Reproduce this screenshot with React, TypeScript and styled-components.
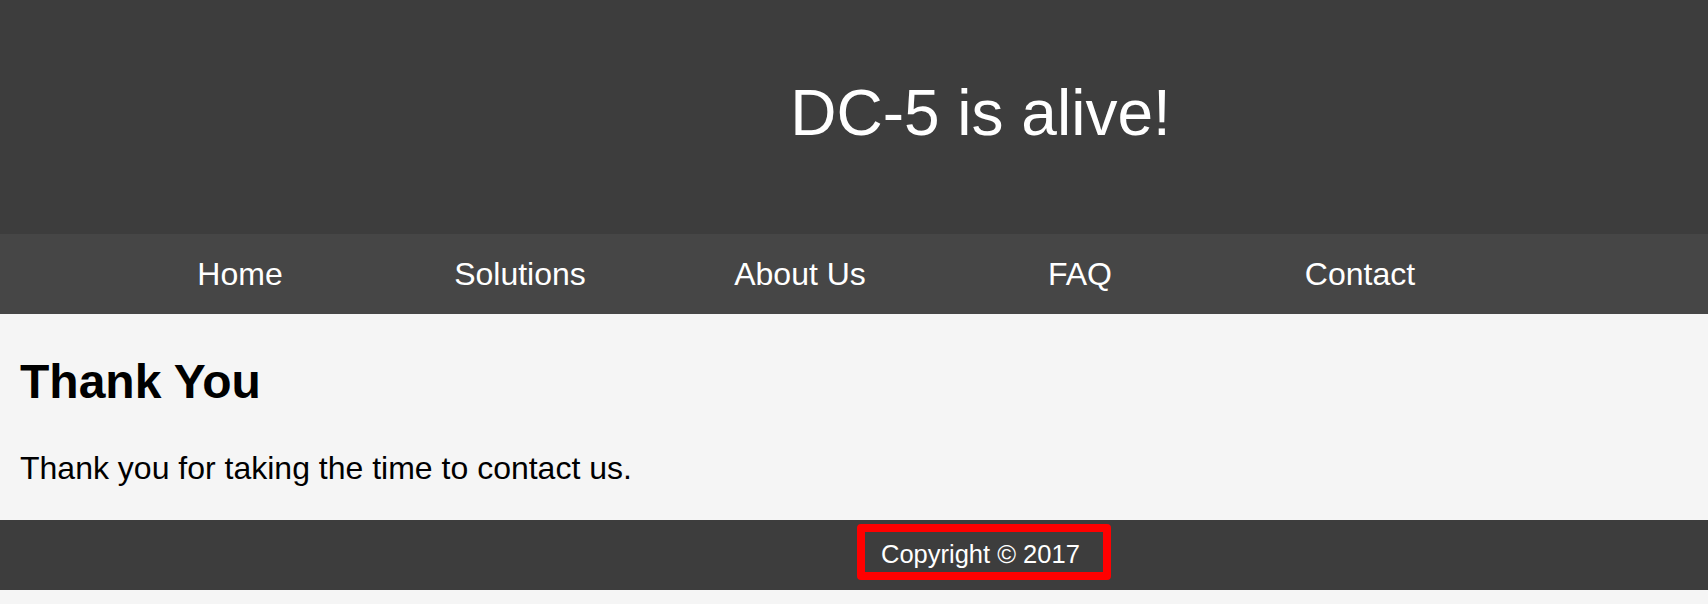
import styled, { createGlobalStyle } from "styled-components";

const GlobalStyle = createGlobalStyle`
  html, body {
    margin: 0;
    padding: 0;
    background: #f5f5f5;
    font-family: "Liberation Sans", Arial, sans-serif;
    font-size: 32px;
  }
`;

const Page = styled.div`
  width: 1708px;
  min-height: 604px;
  background: #f5f5f5;
`;

const Header = styled.header`
  height: 234px;
  box-sizing: border-box;
  padding: 76px 0 0 253px;
  background: #3d3d3d;
  text-align: center;
`;

const Title = styled.h1`
  margin: 0;
  font-size: 64px;
  font-weight: 400;
  line-height: normal;
  color: #ffffff;
`;

const Nav = styled.nav`
  height: 80px;
  display: flex;
  align-items: center;
  padding-left: 100px;
  background: #464646;
`;

const NavItem = styled.a`
  width: 280px;
  text-align: center;
  font-size: 32px;
  color: #ffffff;
  text-decoration: none;
`;

const Content = styled.main`
  height: 206px;
  box-sizing: border-box;
  padding: 40px 20px 0;
  overflow: hidden;
`;

const Heading = styled.h2`
  margin: 0;
  font-size: 48px;
  font-weight: 700;
  line-height: normal;
  color: #000000;
`;

const Text = styled.p`
  margin: 41px 0 0;
  font-size: 32px;
  line-height: normal;
  color: #000000;
`;

const Footer = styled.footer`
  height: 70px;
  display: flex;
  justify-content: center;
  align-items: flex-start;
  padding: 4px 0 0 260px;
  box-sizing: border-box;
  background: #3d3d3d;
`;

const Copyright = styled.div`
  width: 254px;
  height: 56px;
  box-sizing: border-box;
  border: 8px solid #ff0000;
  border-radius: 4px;
  padding: 8px 0 0 16px;
  font-size: 25.5px;
  line-height: normal;
  color: #ffffff;
  white-space: nowrap;
`;

const links = ["Home", "Solutions", "About Us", "FAQ", "Contact"];

const App = () => {
  return (
    <Page>
      <GlobalStyle />
      <Header>
        <Title>DC-5 is alive!</Title>
      </Header>
      <Nav>
        {links.map((l) => (
          <NavItem key={l} href="#">
            {l}
          </NavItem>
        ))}
      </Nav>
      <Content>
        <Heading>Thank You</Heading>
        <Text>Thank you for taking the time to contact us.</Text>
      </Content>
      <Footer>
        <Copyright>Copyright © 2017</Copyright>
      </Footer>
    </Page>
  );
};

export default App;
